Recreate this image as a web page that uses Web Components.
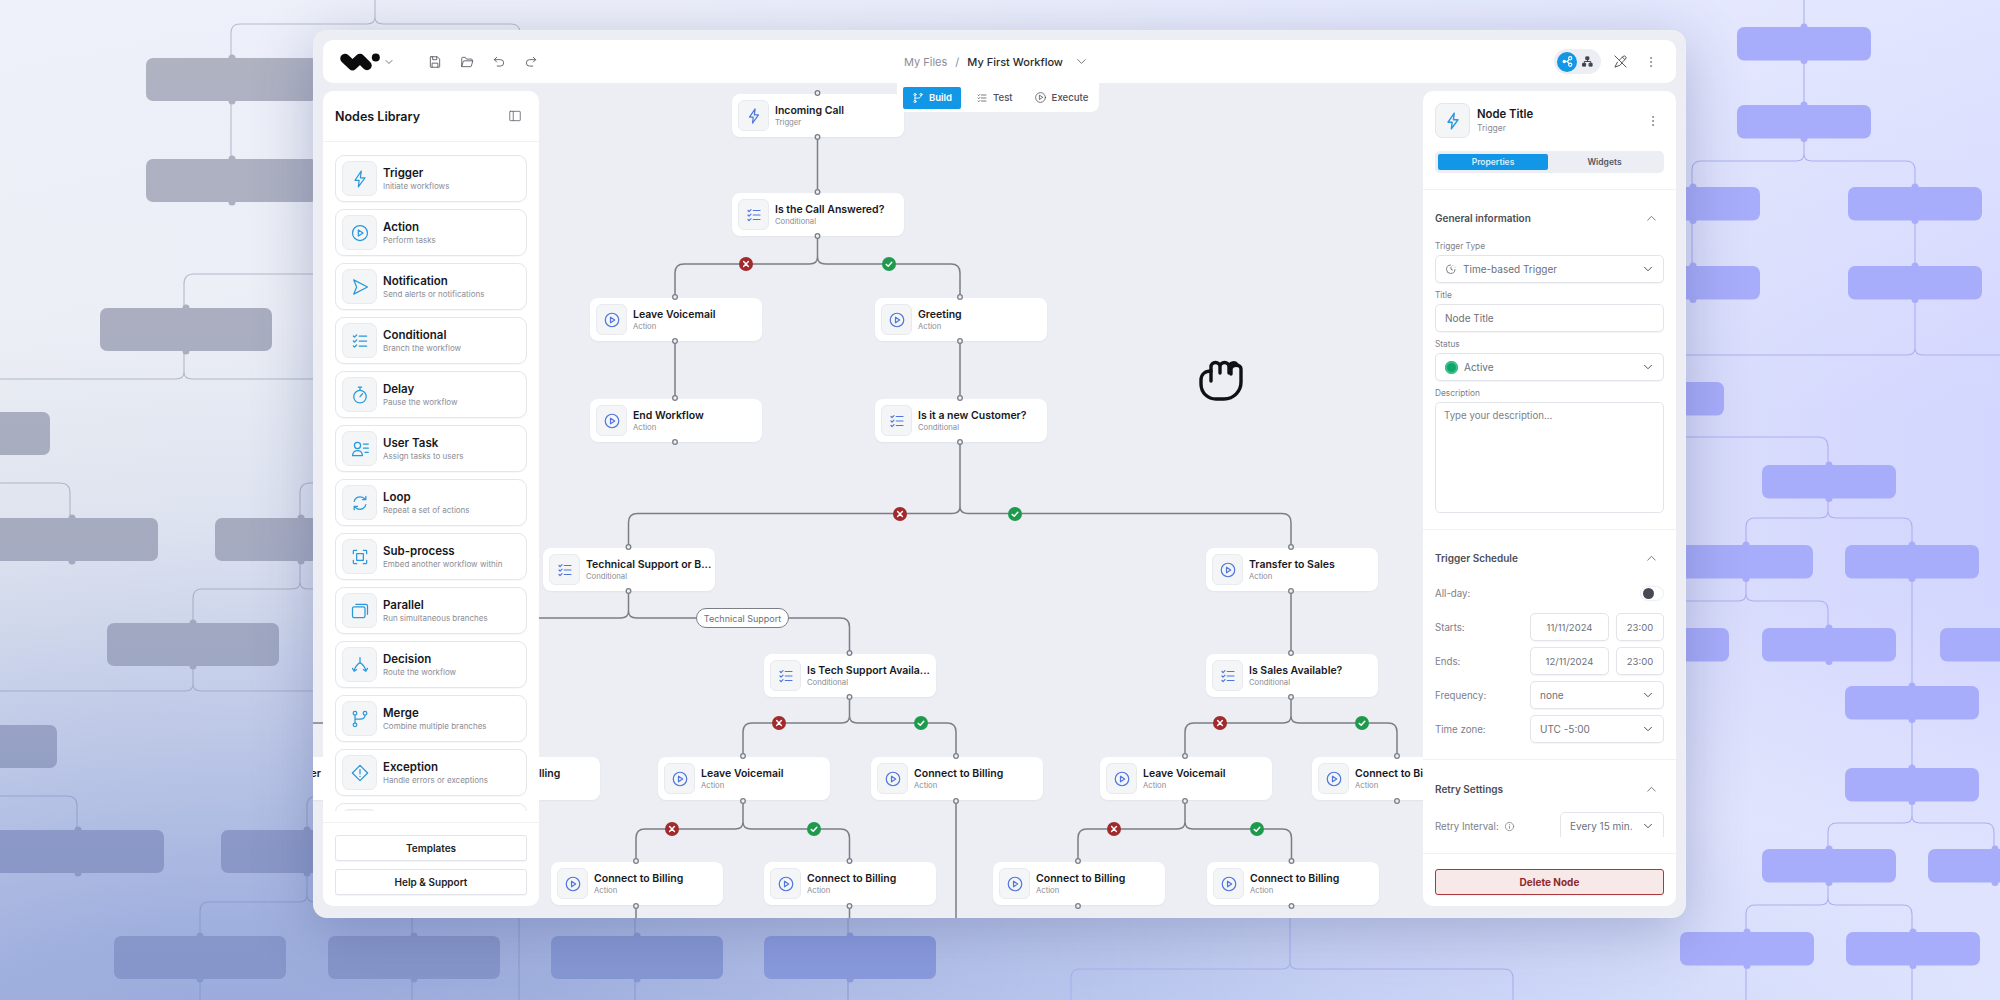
<!DOCTYPE html>
<html>
<head>
<meta charset="utf-8">
<title>Workflow builder</title>
<style>
  html, body { margin: 0; height: 100%; overflow: hidden; }
</style>
</head>
<body>
<wf-app></wf-app>
<script>
const ICONS = {
  bolt: '<path d="M13.5 2.5 6 13.5h5L10 21.5l8-11h-5.5l1-8z"/>',
  play: '<circle cx="12" cy="12" r="9"/><path d="M10 8.3v7.4l5.6-3.7z"/>',
  send: '<path d="M4.5 3.5 21 12 4.5 20.5 8 12 4.5 3.5z"/>',
  checks: '<path d="M11 6h9M11 12h9M11 18h9M4 6l1.4 1.4L8 4.8M4 12l1.4 1.4L8 10.8M4 18l1.4 1.4L8 16.8"/>',
  timer: '<circle cx="12" cy="14" r="7.5"/><path d="M10 2.5h4M12 14l3-3.5M12 2.5v4"/>',
  usertask: '<path d="M9 11.5a3.7 3.7 0 1 0 0-7.4 3.7 3.7 0 0 0 0 7.4zM3 20c.3-4 2.8-6 6-6s5.7 2 6 6zM16 6h6M16 11h6M18 16h4"/>',
  loop: '<path d="M5 10c1-3.5 4-5.5 7.2-5.5 2.6 0 4.7 1.2 6.3 3.2M19 4v4h-4M19 14c-1 3.5-4 5.5-7.2 5.5-2.6 0-4.7-1.2-6.3-3.2M5 20v-4h4"/>',
  subprocess: '<path d="M4 8V5a1 1 0 0 1 1-1h3M16 4h3a1 1 0 0 1 1 1v3M20 16v3a1 1 0 0 1-1 1h-3M8 20H5a1 1 0 0 1-1-1v-3"/><rect x="8" y="8" width="8" height="8"/>',
  parallel: '<rect x="3" y="7" width="15" height="13" rx="2"/><path d="M7 4h12a2 2 0 0 1 2 2v10"/>',
  decision: '<path d="M12 3v6M12 9c-3 2-6 5-7 10M12 9c3 2 6 5 7 10M3 16l2 3.5 3-2M21 16l-2 3.5-3-2"/>',
  merge: '<circle cx="6" cy="5" r="2.2"/><circle cx="18" cy="5" r="2.2"/><circle cx="6" cy="19" r="2.2"/><path d="M6 7.2v9.6M18 7.2c0 4-3 5-6 5H6"/>',
  exception: '<path d="M12 2.8 21.2 12 12 21.2 2.8 12zM12 8v5M12 16v.2"/>',
  clock: '<path d="M11 4a8.5 8.5 0 1 0 9 9M15.5 4.6l.1.1M19.4 8.4l.1.1M12 8v4.5l3 1.5"/>',
  save: '<path d="M5 3h11l4 4v13a1 1 0 0 1-1 1H5a1 1 0 0 1-1-1V4a1 1 0 0 1 1-1zM8 3v5h7V3M7 21v-7h10v7"/>',
  folder: '<path d="M3 19V5.5A1.5 1.5 0 0 1 4.5 4H9l2 3h8.5A1.5 1.5 0 0 1 21 8.5V10M3 19l2.8-8.2a1 1 0 0 1 1-.8H22l-2.7 9.2a1 1 0 0 1-1 .8H4a1 1 0 0 1-1-1z"/>',
  undo: '<path d="M8 4 4 8l4 4M4 8h10.5a5.5 5.5 0 0 1 0 11H9"/>',
  redo: '<path d="M16 4l4 4-4 4M20 8H9.5a5.5 5.5 0 0 0 0 11H15"/>',
  down: '<path d="M6 9l6 6 6-6"/>',
  up: '<path d="M5 15l7-7 7 7"/>',
  panel: '<rect x="3" y="4" width="18" height="16" rx="1"/><path d="M9 4v16"/>',
  penoff: '<path d="M7 13l-4 8 8-3 3.5-3.5M10 10l6-6a2 2 0 0 1 4 4l-6 6M15 5l4 4M3 3l18 18"/>',
  kebab: '<circle cx="12" cy="5" r="1" fill="currentColor"/><circle cx="12" cy="12" r="1" fill="currentColor"/><circle cx="12" cy="19" r="1" fill="currentColor"/>',
  graph: '<circle cx="17" cy="6" r="3"/><circle cx="17" cy="18" r="3"/><circle cx="6" cy="12" r="2.2" fill="currentColor"/><path d="M8 12h5M15 8.500l-4 3.500 4 3.500"/>',
  tree: '<rect x="9.500" y="3.500" width="5" height="5" fill="currentColor"/><rect x="3.500" y="15.500" width="5" height="5" fill="currentColor"/><rect x="15.500" y="15.500" width="5" height="5" fill="currentColor"/><path d="M12 8.500V12M6 15.500V12h12v3.500"/>',
  branch: '<circle cx="6" cy="5" r="2.2"/><circle cx="18" cy="5" r="2.2"/><circle cx="6" cy="19" r="2.2"/><path d="M6 7.200v9.600M18 7.200c0 4-3 5-6 5H6"/>',
  info: '<circle cx="12" cy="12" r="9"/><path d="M12 11v5.500M12 7.500v.2"/>',
};

class WfIcon extends HTMLElement {
  constructor() {
    super();
    this.attachShadow({ mode: "open" });
    const size = this.getAttribute("size") || 18;
    const sw = this.getAttribute("sw") || 1.6;
    this.shadowRoot.innerHTML = `
      <style>
        :host { display: inline-flex; width: ${size}px; height: ${size}px; flex: none; }
        svg { width: 100%; height: 100%; fill: none; stroke: currentColor; stroke-width: ${sw}; stroke-linecap: round; stroke-linejoin: round; }
      </style>
      <svg viewBox="0 0 24 24">${ICONS[this.getAttribute("name")] || ""}</svg>`;
  }
}

// rounded fork used by both the real canvas and the faded backdrop
function fork(cx, y0, yj, lx, rx, yl, yr) {
  let d = `M${cx} ${y0}V${yj - 7}`;
  if (lx !== null) {
    const r = 9;
    d += `M${cx} ${yj - 7}Q${cx} ${yj} ${cx - 8} ${yj}H${lx + (yl ? r : 0)}`;
    if (yl) d += `Q${lx} ${yj} ${lx} ${yj + r}V${yl}`;
  }
  if (rx !== null) {
    const r = 9;
    d += `M${cx} ${yj - 7}Q${cx} ${yj} ${cx + 8} ${yj}H${rx - (yr ? r : 0)}`;
    if (yr) d += `Q${rx} ${yj} ${rx} ${yj + r}V${yr}`;
  }
  return d;
}

class WfBackdrop extends HTMLElement {
  constructor() {
    super();
    this.attachShadow({ mode: "open" });
    const left = [
      [146, 58], [146, 159], [100, 308], [-122, 412], [-14, 518], [215, 518], [107, 623],
      [-115, 725], [-8, 830], [221, 830], [114, 936], [328, 936],
    ];
    const blue = [[551, 936, "#8698d3"], [764, 936, "#8a9bdd"]];
    const right = [
      [1737, 27], [1737, 105], [1626, 187], [1848, 187], [1626, 266], [1848, 266], [1590, 382],
      [1762, 465], [1679, 545], [1845, 545], [1595, 628], [1762, 628], [1940, 628],
      [1845, 686], [1845, 768], [1762, 849], [1928, 849], [1680, 932], [1846, 932],
    ];
    const rect = (b, w, h, fill) => {
      const cx = b[0] + w / 2;
      return `<g fill="${fill}"><rect x="${b[0]}" y="${b[1]}" width="${w}" height="${h}" rx="7"/>
        <circle cx="${cx}" cy="${b[1]}" r="3.500"/><circle cx="${cx}" cy="${b[1] + h}" r="3.500"/></g>`;
    };
    const leftLines = [
      fork(375, -10, 24, 231, 520, 58, 40),
      "M231 101V159",
      "M313 274H194Q184 274 184 284V308",
      fork(184, 350, 379, 0, 313),
      "M0 483H60Q70 483 70 493V518",
      "M313 483H310Q300 483 300 493V518",
      fork(300, 560, 589, 193, 313, 623),
      fork(193, 665, 691, 0, 313),
      "M0 796H67Q77 796 77 806V830",
      "M313 796H317Q307 796 307 806V830",
      fork(307, 873, 902, 200, 313, 936),
      "M412 917V936M635 917V936M848 917V936M519 917V1000",
      "M200 979V1000M412 979V1000M635 979V1000M848 979V1000",
    ];
    const rightLines = [
      "M1804 0V27M1804 62V105",
      fork(1804, 138, 161, 1692, 1915, 187, 187),
      "M1692 221V266M1915 221V266",
      fork(1915, 299, 355, 1686, 2000),
      "M1686 437H1818Q1828 437 1828 447V465",
      fork(1828, 498, 518, 1746, 1912, 545, 545),
      fork(1746, 579, 601, 1686, 1828, null, 628),
      "M1912 579V686M1912 719V768",
      fork(1912, 802, 823, 1828, 1994, 849, 849),
      fork(1828, 883, 905, 1746, 1912, 932, 932),
      "M1746 965V1000M1912 965V1000",
      fork(1290, 917, 969, 1071, 1513, 1000, 1000),
    ];
    this.shadowRoot.innerHTML = `
      <style>
        :host {
          display: block;
          position: absolute;
          inset: 0;
          background:
            radial-gradient(1500px 800px at 12% 112%, #93a5d9 0%, rgba(147,165,217,.85) 25%, rgba(147,165,217,.5) 50%, rgba(147,165,217,.15) 75%, rgba(147,165,217,0) 100%),
            radial-gradient(1000px 300px at 62% 108%, rgba(180,196,246,.75) 0%, rgba(180,196,246,0) 100%),
            linear-gradient(180deg, rgba(240,243,255,.5) 0%, rgba(240,243,255,0) 42%, rgba(240,243,255,0) 60%, rgba(240,243,255,.65) 100%),
            linear-gradient(90deg, #ebeef3 0%, #eaedf6 35%, #dde1fb 75%, #d3d6fe 100%);
        }
        svg { display: block; width: 2000px; height: 1000px; }
      </style>
      <svg viewBox="0 0 2000 1000">
        <defs>
          <linearGradient id="grey" gradientUnits="userSpaceOnUse" x1="0" y1="0" x2="0" y2="1000">
            <stop offset="0" stop-color="#b0b3c2"/>
            <stop offset=".5" stop-color="#a7acbf"/>
            <stop offset=".68" stop-color="#9ea6c3"/>
            <stop offset=".85" stop-color="#8a98c7"/>
            <stop offset="1" stop-color="#8596cb"/>
          </linearGradient>
        </defs>
        <path d="${leftLines.join("")}" fill="none" stroke="url(#grey)" stroke-width="1.100" opacity=".85"/>
        <path d="${rightLines.join("")}" fill="none" stroke="#abb0f2" stroke-width="1.100"/>
        ${left.map((b) => rect(b, 172, 43, "url(#grey)")).join("")}
        ${blue.map((b) => rect(b, 172, 43, b[2])).join("")}
        ${right.map((b) => rect(b, 134, 33.500, "#a8adfb")).join("")}
      </svg>`;
  }
}

class WfTopbar extends HTMLElement {
  constructor() {
    super();
    this.attachShadow({ mode: "open" });
    this.shadowRoot.innerHTML = `
      <style>
        :host {
          display: grid;
          grid-template-columns: 1fr auto 1fr;
          align-items: center;
          height: 43px;
          background: #fff;
          border-radius: 10px;
          padding: 0 18px 0 17px;
          color: #3e4049;
          position: relative;
          z-index: 3;
        }
        .left, .right { display: flex; align-items: center; }
        .right { justify-content: flex-end; }
        .logo { width: 40px; height: 18px; display: block; }
        .logo-chev { margin-left: 3px; color: #555; }
        .tools { display: flex; gap: 18px; margin-left: 33px; color: #555862; }
        .crumbs { display: flex; align-items: center; font-size: 11px; color: #8a8d96; margin-right: 5px; }
        .crumbs b { font-weight: 500; color: #2a2b31; margin-left: 8px; }
        .crumbs i { font-style: normal; margin-left: 8px; }
        .crumbs wf-icon { margin-left: 11px; color: #555862; }
        .toggle { display: flex; align-items: center; width: 47px; height: 25px; border-radius: 13px; background: #eceef3; padding-left: 3px; box-sizing: border-box; margin-right: 12px; }
        .toggle .on { width: 20px; height: 20px; border-radius: 50%; background: #1296e6; color: #fff; display: flex; align-items: center; justify-content: center; }
        .toggle .off { margin-left: 4px; color: #3e4049; display: flex; }
        .pen { margin-right: 16px; color: #3e4049; }
        .kebab { color: #8a8d96; }
      </style>
      <div class="left">
        <svg class="logo" viewBox="0 0 40 18">
          <path d="M5 5.500 12.500 12.500 20 5.500 27 12.500" fill="none" stroke="#0b0b0d" stroke-width="9.500" stroke-linecap="round" stroke-linejoin="round"/>
          <circle cx="35.800" cy="4.500" r="4" fill="#0b0b0d"/>
        </svg>
        <wf-icon class="logo-chev" name="down" size="12"></wf-icon>
        <div class="tools">
          <wf-icon name="save" size="14" sw="1.500"></wf-icon>
          <wf-icon name="folder" size="14" sw="1.500"></wf-icon>
          <wf-icon name="undo" size="14" sw="1.500"></wf-icon>
          <wf-icon name="redo" size="14" sw="1.500"></wf-icon>
        </div>
      </div>
      <div class="crumbs">
        <span>My Files</span><i>/</i><b>My First Workflow</b>
        <wf-icon name="down" size="15" sw="1.300"></wf-icon>
      </div>
      <div class="right">
        <div class="toggle">
          <span class="on"><wf-icon name="graph" size="13" sw="2"></wf-icon></span>
          <span class="off"><wf-icon name="tree" size="13" sw="1.800"></wf-icon></span>
        </div>
        <wf-icon class="pen" name="penoff" size="15" sw="1.400"></wf-icon>
        <wf-icon class="kebab" name="kebab" size="14"></wf-icon>
      </div>`;
  }
}

class LibItem extends HTMLElement {
  constructor() {
    super();
    this.attachShadow({ mode: "open" });
    this.shadowRoot.innerHTML = `
      <style>
        :host {
          display: flex;
          align-items: center;
          flex: none;
          box-sizing: border-box;
          height: 47px;
          padding: 0 6px;
          border: 1px solid #e4e6ea;
          border-radius: 9px;
          background: #fff;
          box-shadow: 0 1px 1px rgba(30,35,60,.03);
        }
        .tile { width: 35px; height: 35px; box-sizing: border-box; border-radius: 7px; background: #f4f5f7; border: 1px solid #e9eaee; display: flex; align-items: center; justify-content: center; color: #2a98da; margin-right: 6px; flex: none; }
        .t { font-size: 11.500px; font-weight: 600; color: #17181d; line-height: 15px; }
        .s { font-size: 8px; color: #8a8d96; line-height: 11px; }
      </style>
      <span class="tile"><wf-icon name="${this.getAttribute("icon")}" size="20" sw="1.500"></wf-icon></span>
      <div>
        <div class="t">${this.getAttribute("label")}</div>
        <div class="s">${this.getAttribute("hint")}</div>
      </div>`;
  }
}

class WfButton extends HTMLElement {
  constructor() {
    super();
    this.attachShadow({ mode: "open" });
    this.shadowRoot.innerHTML = `
      <style>
        :host {
          display: flex;
          align-items: center;
          justify-content: center;
          box-sizing: border-box;
          height: 26px;
          border: 1px solid #e2e4e9;
          border-radius: 3px;
          background: #fff;
          font-size: 10px;
          font-weight: 600;
          color: #1d1e24;
          box-shadow: 0 1px 1px rgba(30,35,60,.05);
        }
        :host([danger]) { background: #f8e9e9; border-color: #a8383c; color: #8f2a2e; font-weight: 700; }
      </style>
      <slot></slot>`;
  }
}

class WfLibrary extends HTMLElement {
  constructor() {
    super();
    this.attachShadow({ mode: "open" });
    const items = [
      ["bolt", "Trigger", "Initiate workflows"],
      ["play", "Action", "Perform tasks"],
      ["send", "Notification", "Send alerts or notifications"],
      ["checks", "Conditional", "Branch the workflow"],
      ["timer", "Delay", "Pause the workflow"],
      ["usertask", "User Task", "Assign tasks to users"],
      ["loop", "Loop", "Repeat a set of actions"],
      ["subprocess", "Sub-process", "Embed another workflow within"],
      ["parallel", "Parallel", "Run simultaneous branches"],
      ["decision", "Decision", "Route the workflow"],
      ["merge", "Merge", "Combine multiple branches"],
      ["exception", "Exception", "Handle errors or exceptions"],
      ["", "", ""],
    ];
    this.shadowRoot.innerHTML = `
      <style>
        :host {
          display: flex;
          flex-direction: column;
          width: 216px;
          background: #fff;
          border-radius: 10px;
          overflow: hidden;
          position: relative;
          z-index: 2;
        }
        .head { height: 50px; flex: none; display: flex; align-items: center; justify-content: space-between; padding: 0 17px 0 12px; border-bottom: 1px solid #f0f1f4; font-size: 12.500px; font-weight: 600; color: #17181d; }
        .head wf-icon { color: #555862; }
        .list { flex: 1; min-height: 0; display: flex; flex-direction: column; gap: 7px; padding: 13px 12px 0; overflow: hidden; margin-bottom: 11px; }
        .foot { flex: none; border-top: 1px solid #f0f1f4; padding: 12px 12px 11px; display: flex; flex-direction: column; gap: 8px; }
      </style>
      <div class="head"><span>Nodes Library</span><wf-icon name="panel" size="14" sw="1.300"></wf-icon></div>
      <div class="list">
        ${items.map((i) => `<lib-item icon="${i[0]}" label="${i[1]}" hint="${i[2]}"></lib-item>`).join("")}
      </div>
      <div class="foot">
        <wf-button>Templates</wf-button>
        <wf-button>Help &amp; Support</wf-button>
      </div>`;
  }
}

const KIND_ICON = { Trigger: "bolt", Action: "play", Conditional: "checks" };
const CANVAS_X = 313;
const CANVAS_Y = 30;

class FlowNode extends HTMLElement {
  constructor() {
    super();
    this.attachShadow({ mode: "open" });
    const kind = this.getAttribute("kind");
    this.shadowRoot.innerHTML = `
      <style>
        :host {
          position: absolute;
          left: ${this.getAttribute("x") - CANVAS_X}px;
          top: ${this.getAttribute("y") - CANVAS_Y}px;
          width: 172px;
          height: 43px;
          box-sizing: border-box;
          display: flex;
          align-items: center;
          padding-left: 6px;
          background: #fff;
          border-radius: 8px;
          box-shadow: 0 1px 2px rgba(30,35,60,.05);
        }
        .tile { width: 31px; height: 31px; box-sizing: border-box; border-radius: 6px; background: #f4f5f7; border: 1px solid #e9eaee; display: flex; align-items: center; justify-content: center; color: #4f76dc; margin-right: 6px; flex: none; }
        .t { font-size: 10.500px; font-weight: 600; color: #17181d; line-height: 13px; white-space: nowrap; }
        .s { font-size: 7.700px; color: #8a8d96; line-height: 11px; }
      </style>
      <span class="tile"><wf-icon name="${KIND_ICON[kind]}" size="18" sw="1.600"></wf-icon></span>
      <div>
        <div class="t"><slot></slot></div>
        <div class="s">${kind}</div>
      </div>`;
  }
}

class FlowBadge extends HTMLElement {
  constructor() {
    super();
    this.attachShadow({ mode: "open" });
    const ok = this.hasAttribute("ok");
    this.shadowRoot.innerHTML = `
      <style>
        :host {
          position: absolute;
          left: ${this.getAttribute("x") - CANVAS_X - 7}px;
          top: ${this.getAttribute("y") - CANVAS_Y - 7}px;
          width: 14px;
          height: 14px;
          border-radius: 50%;
          background: ${ok ? "#1f9a4d" : "#a12a2c"};
          display: flex;
          align-items: center;
          justify-content: center;
        }
        svg { width: 8px; height: 8px; fill: none; stroke: #fff; stroke-width: 1.800; stroke-linecap: round; stroke-linejoin: round; }
      </style>
      <svg viewBox="0 0 10 10"><path d="${ok ? "M1.500 5.500l2.500 2.300 4.500-5" : "M2 2l6 6M8 2l-6 6"}"/></svg>`;
  }
}

class FlowPill extends HTMLElement {
  constructor() {
    super();
    this.attachShadow({ mode: "open" });
    this.shadowRoot.innerHTML = `
      <style>
        :host {
          position: absolute;
          left: ${this.getAttribute("x") - CANVAS_X}px;
          top: ${this.getAttribute("y") - CANVAS_Y}px;
          width: 93px;
          height: 20px;
          box-sizing: border-box;
          border: 1.500px solid #7b7e87;
          border-radius: 10px;
          background: #fff;
          display: flex;
          align-items: center;
          justify-content: center;
          font-size: 9px;
          color: #6d7078;
        }
      </style>
      <slot></slot>`;
  }
}

class CanvasTabs extends HTMLElement {
  constructor() {
    super();
    this.attachShadow({ mode: "open" });
    this.shadowRoot.innerHTML = `
      <style>
        :host {
          position: absolute;
          left: ${897 - CANVAS_X}px;
          top: ${83 - CANVAS_Y}px;
          box-sizing: border-box;
          width: 202px;
          height: 29px;
          padding: 3px 6px;
          background: #fff;
          border-radius: 0 0 8px 8px;
          display: flex;
          align-items: center;
          font-size: 9.600px;
          font-weight: 500;
          color: #4b4e57;
        }
        span { display: flex; align-items: center; gap: 5px; height: 22px; }
        .on { width: 58px; box-sizing: border-box; justify-content: center; background: #1296e6; color: #fff; border-radius: 2px; font-weight: 600; margin-right: 15px; }
        .test { margin-right: 21px; }
      </style>
      <span class="on"><wf-icon name="branch" size="12" sw="1.800"></wf-icon>Build</span>
      <span class="test"><wf-icon name="checks" size="12" sw="1.500"></wf-icon>Test</span>
      <span><wf-icon name="play" size="13" sw="1.400"></wf-icon>Execute</span>`;
  }
}

class WfCanvas extends HTMLElement {
  constructor() {
    super();
    this.attachShadow({ mode: "open" });
    const edges = [
      "M817.500 137V192",
      fork(817.5, 236, 264, 675, 960, 297, 297),
      "M675 341V398M960 341V398",
      fork(960, 442, 513.5, 628.5, 1291, 547, 547),
      fork(628.5, 591, 618, 520, 849.5, null, 653),
      fork(849.5, 697, 723, 743, 956, 756, 756),
      fork(743, 801, 829, 636, 849.5, 861, 861),
      "M956 801V918M636 906V918M849.500 906V918",
      "M1291 591V653",
      fork(1291, 697, 723, 1185, 1397, 756, 756),
      fork(1185, 801, 829, 1078, 1291.5, 861, 861),
      "M313 723H325",
    ];
    const ports = [
      [817.5, 93], [817.5, 137], [817.5, 192], [817.5, 236],
      [675, 297], [675, 341], [675, 398], [675, 442],
      [960, 297], [960, 341], [960, 398], [960, 442],
      [628.5, 547], [628.5, 591], [1291, 547], [1291, 591],
      [849.5, 653], [849.5, 697], [1291, 653], [1291, 697],
      [743, 756], [743, 801], [956, 756], [956, 801],
      [1185, 756], [1185, 801], [1397, 756], [1397, 801],
      [636, 861], [636, 906], [849.5, 861], [849.5, 906],
      [1078, 861], [1078, 906], [1291.5, 861], [1291.5, 906],
    ];
    this.shadowRoot.innerHTML = `
      <style>
        :host {
          position: absolute;
          inset: 0;
          overflow: hidden;
          border-radius: inherit;
          z-index: 1;
        }
        svg { position: absolute; left: 0; top: 0; width: 1373px; height: 888px; }
        .over { z-index: 2; pointer-events: none; }
        .hand { left: ${1180 - CANVAS_X}px; top: ${340 - CANVAS_Y}px; width: 80px; height: 80px; }
      </style>
      <svg viewBox="${CANVAS_X} ${CANVAS_Y} 1373 888">
        <path d="${edges.join("")}" fill="none" stroke="#7b7e87" stroke-width="1.500"/>
      </svg>
      <slot></slot>
      <svg class="over" viewBox="${CANVAS_X} ${CANVAS_Y} 1373 888">
        ${ports.map((p) => `<circle cx="${p[0]}" cy="${p[1]}" r="2.300" fill="#eef0f4" stroke="#7b7e87" stroke-width="1.300"/>`).join("")}
      </svg>
      <svg class="over hand" viewBox="0 0 80 80" fill="none" stroke="#101114" stroke-width="3.400" stroke-linecap="round" stroke-linejoin="round">
        <path d="M31 41V27a4.500 4.500 0 0 1 9 0v6M40 27a4.500 4.500 0 0 1 9 0v6M49 27a4.500 4.500 0 0 1 8 -2.500"/>
        <path d="M31 31c-6 0-10 3.500-10 9v4c0 9 7 15 15 15h8c10 0 17-8 17-17V29c0-5-9-5-10 0v5"/>
      </svg>`;
  }
}

class InsSection extends HTMLElement {
  constructor() {
    super();
    this.attachShadow({ mode: "open" });
    this.shadowRoot.innerHTML = `
      <style>
        :host { display: block; padding: ${this.getAttribute("pad") || "20px 12px 16px"}; border-bottom: 1px solid #f0f1f4; }
        :host([last]) { border-bottom: 0; }
        .h { display: flex; align-items: center; justify-content: space-between; height: 16px; font-size: 10px; font-weight: 600; color: #4b4e57; padding-right: 6px; }
        .h wf-icon { color: #5b5e67; }
        .b { display: flex; flex-direction: column; margin-top: ${this.getAttribute("gap") || 14}px; }
      </style>
      <div class="h"><span>${this.getAttribute("title")}</span><wf-icon name="up" size="13" sw="1.500"></wf-icon></div>
      <div class="b"><slot></slot></div>`;
  }
}

class InsBox extends HTMLElement {
  constructor() {
    super();
    this.attachShadow({ mode: "open" });
    const chev = this.hasAttribute("chevron") ? '<wf-icon name="down" size="14" sw="1.700"></wf-icon>' : "";
    this.shadowRoot.innerHTML = `
      <style>
        :host {
          display: flex;
          align-items: center;
          box-sizing: border-box;
          flex: 1;
          min-width: 0;
          height: 28px;
          padding: 0 8px 0 9px;
          border: 1px solid #e2e4e9;
          border-radius: 5px;
          background: #fff;
          font-size: 10px;
          color: #6d7078;
          box-shadow: 0 1px 1px rgba(30,35,60,.04);
        }
        :host([center]) { justify-content: center; padding: 0; font-size: 9.500px; }
        .t { flex: 1; display: flex; align-items: center; gap: 6px; }
        :host([center]) .t { flex: none; }
        wf-icon { color: #4b4e57; }
      </style>
      <span class="t"><slot></slot></span>${chev}`;
  }
}

class InsField extends HTMLElement {
  constructor() {
    super();
    this.attachShadow({ mode: "open" });
    this.shadowRoot.innerHTML = `
      <style>
        :host { display: block; margin-bottom: 6px; }
        :host(:last-child) { margin-bottom: 0; }
        label { display: block; height: 12px; line-height: 12px; font-size: 8.300px; color: #7d8089; margin-bottom: 3px; }
        div { display: flex; }
      </style>
      <label>${this.getAttribute("label")}</label>
      <div><slot></slot></div>`;
  }
}

class InsRow extends HTMLElement {
  constructor() {
    super();
    this.attachShadow({ mode: "open" });
    this.shadowRoot.innerHTML = `
      <style>
        :host { display: grid; grid-template-columns: 95px 1fr; align-items: center; height: 28px; margin-bottom: 6px; font-size: 9.700px; color: #7d8089; }
        :host([compact]) { margin-bottom: 0; }
        div { display: flex; gap: 7px; }
      </style>
      <span><slot name="label"></slot></span>
      <div><slot></slot></div>`;
  }
}

class WfInspector extends HTMLElement {
  constructor() {
    super();
    this.attachShadow({ mode: "open" });
    this.shadowRoot.innerHTML = `
      <style>
        :host {
          display: flex;
          flex-direction: column;
          width: 253px;
          background: #fff;
          border-radius: 10px;
          overflow: hidden;
          position: relative;
          z-index: 2;
        }
        .scroll { flex: 1; min-height: 0; overflow: hidden; margin-bottom: 16px; }
        .top { padding: 12px 12px 16px; border-bottom: 1px solid #f0f1f4; }
        .who { display: flex; align-items: center; height: 35px; }
        .tile { width: 35px; height: 35px; box-sizing: border-box; border-radius: 7px; background: #f4f5f7; border: 1px solid #e4e6ea; display: flex; align-items: center; justify-content: center; color: #2a98da; margin-right: 7px; flex: none; }
        .name { flex: 1; padding-top: 1px; }
        .name b { display: block; font-size: 11.300px; font-weight: 600; color: #17181d; line-height: 15px; }
        .name span { font-size: 8.500px; color: #8a8d96; line-height: 13px; display: block; }
        .who > wf-icon { color: #8a8d96; margin-right: 4px; }
        .tabs { display: grid; grid-template-columns: 110px 1fr; height: 22px; margin-top: 13px; background: #eceef3; border-radius: 5px; padding: 3px; box-sizing: border-box; font-size: 8.500px; font-weight: 600; }
        .tabs span { display: flex; align-items: center; justify-content: center; color: #555862; }
        .tabs .on { background: #1296e6; color: #d9f0ff; border-radius: 2px; }
        .dot { width: 13px; height: 13px; border-radius: 50%; background: #0ea66b; box-shadow: inset 0 0 0 2px #3cc08e; flex: none; }
        .area { flex: 1; height: 111px; box-sizing: border-box; border: 1px solid #e2e4e9; border-radius: 5px; padding: 7px 8px; font-size: 9.700px; color: #7d8089; }
        .allday { display: flex; align-items: center; justify-content: space-between; height: 15px; margin-top: 20px; margin-bottom: 12px; font-size: 9.700px; color: #7d8089; }
        .switch { width: 24px; height: 15px; border-radius: 8px; background: #fff; border: 1px solid #eceef3; box-sizing: border-box; display: flex; align-items: center; padding-left: 2px; }
        .switch i { width: 11px; height: 11px; border-radius: 50%; background: #474a54; }
        .retry-label { display: flex; align-items: center; gap: 5px; }
        .retry-label wf-icon { color: #6d7078; }
        .foot { flex: none; border-top: 1px solid #f0f1f4; padding: 15px 12px 11px; }
      </style>
      <div class="scroll">
        <div class="top">
          <div class="who">
            <span class="tile"><wf-icon name="bolt" size="20" sw="1.700"></wf-icon></span>
            <div class="name"><b>Node Title</b><span>Trigger</span></div>
            <wf-icon name="kebab" size="14"></wf-icon>
          </div>
          <div class="tabs"><span class="on">Properties</span><span>Widgets</span></div>
        </div>
        <ins-section title="General information">
          <ins-field label="Trigger Type"><ins-box chevron><wf-icon name="clock" size="12" sw="1.800"></wf-icon>Time-based Trigger</ins-box></ins-field>
          <ins-field label="Title"><ins-box>Node Title</ins-box></ins-field>
          <ins-field label="Status"><ins-box chevron><span class="dot"></span>Active</ins-box></ins-field>
          <ins-field label="Description"><div class="area">Type your description...</div></ins-field>
        </ins-section>
        <ins-section title="Trigger Schedule" pad="20px 12px 16px" gap="0">
          <div class="allday"><span>All-day:</span><span class="switch"><i></i></span></div>
          <ins-row><span slot="label">Starts:</span><ins-box center style="flex:0 0 79px">11/11/2024</ins-box><ins-box center>23:00</ins-box></ins-row>
          <ins-row><span slot="label">Ends:</span><ins-box center style="flex:0 0 79px">12/11/2024</ins-box><ins-box center>23:00</ins-box></ins-row>
          <ins-row><span slot="label">Frequency:</span><ins-box chevron>none</ins-box></ins-row>
          <ins-row compact><span slot="label">Time zone:</span><ins-box chevron>UTC -5:00</ins-box></ins-row>
        </ins-section>
        <ins-section title="Retry Settings" pad="21px 12px 0" gap="15" last>
          <ins-row compact style="grid-template-columns:125px 1fr"><span slot="label" class="retry-label">Retry Interval: <wf-icon name="info" size="11" sw="1.500"></wf-icon></span><ins-box chevron>Every 15 min.</ins-box></ins-row>
        </ins-section>
      </div>
      <div class="foot"><wf-button danger>Delete Node</wf-button></div>`;
  }
}

class WfWindow extends HTMLElement {
  constructor() {
    super();
    this.attachShadow({ mode: "open" });
    this.shadowRoot.innerHTML = `
      <style>
        :host {
          display: flex;
          flex-direction: column;
          gap: 8px;
          position: relative;
          box-sizing: border-box;
          width: 1373px;
          height: 888px;
          padding: 10px 10px 12px;
          background: #eceef3;
          border-radius: 14px;
          box-shadow: 0 14px 60px rgba(60,70,130,.32), inset 0 0 0 1px rgba(255,255,255,.15);
        }
        .main { flex: 1; min-height: 0; display: flex; justify-content: space-between; }
      </style>
      <wf-canvas>
        <flow-node x="732" y="94" kind="Trigger">Incoming Call</flow-node>
        <flow-node x="732" y="193" kind="Conditional">Is the Call Answered?</flow-node>
        <flow-node x="590" y="298" kind="Action">Leave Voicemail</flow-node>
        <flow-node x="875" y="298" kind="Action">Greeting</flow-node>
        <flow-node x="590" y="399" kind="Action">End Workflow</flow-node>
        <flow-node x="875" y="399" kind="Conditional">Is it a new Customer?</flow-node>
        <flow-node x="543" y="548" kind="Conditional">Technical Support or B...</flow-node>
        <flow-node x="1206" y="548" kind="Action">Transfer to Sales</flow-node>
        <flow-node x="764" y="654" kind="Conditional">Is Tech Support Availa...</flow-node>
        <flow-node x="1206" y="654" kind="Conditional">Is Sales Available?</flow-node>
        <flow-node x="235" y="757" kind="Action">Transfer</flow-node>
        <flow-node x="428" y="757" kind="Action">Connect to Billing</flow-node>
        <flow-node x="658" y="757" kind="Action">Leave Voicemail</flow-node>
        <flow-node x="871" y="757" kind="Action">Connect to Billing</flow-node>
        <flow-node x="1100" y="757" kind="Action">Leave Voicemail</flow-node>
        <flow-node x="1312" y="757" kind="Action">Connect to Billing</flow-node>
        <flow-node x="551" y="862" kind="Action">Connect to Billing</flow-node>
        <flow-node x="764" y="862" kind="Action">Connect to Billing</flow-node>
        <flow-node x="993" y="862" kind="Action">Connect to Billing</flow-node>
        <flow-node x="1207" y="862" kind="Action">Connect to Billing</flow-node>
        <flow-badge x="746" y="264"></flow-badge>
        <flow-badge x="889" y="264" ok></flow-badge>
        <flow-badge x="900" y="513.500"></flow-badge>
        <flow-badge x="1015" y="513.500" ok></flow-badge>
        <flow-badge x="778.500" y="723"></flow-badge>
        <flow-badge x="921" y="723" ok></flow-badge>
        <flow-badge x="1220" y="723"></flow-badge>
        <flow-badge x="1362" y="723" ok></flow-badge>
        <flow-badge x="672" y="829"></flow-badge>
        <flow-badge x="814" y="829" ok></flow-badge>
        <flow-badge x="1113.500" y="829"></flow-badge>
        <flow-badge x="1256.500" y="829" ok></flow-badge>
        <flow-pill x="696" y="608">Technical Support</flow-pill>
        <canvas-tabs></canvas-tabs>
      </wf-canvas>
      <wf-topbar></wf-topbar>
      <div class="main">
        <wf-library></wf-library>
        <wf-inspector></wf-inspector>
      </div>`;
  }
}

class WfApp extends HTMLElement {
  constructor() {
    super();
    this.attachShadow({ mode: "open" });
    this.shadowRoot.innerHTML = `
      <style>
        :host {
          display: block;
          position: relative;
          width: 2000px;
          height: 1000px;
          box-sizing: border-box;
          padding: 30px 314px 82px 313px;
          overflow: hidden;
          font-family: Inter, "Open Sans", sans-serif;
          letter-spacing: 0;
        }
      </style>
      <wf-backdrop></wf-backdrop>
      <wf-window></wf-window>`;
  }
}

customElements.define("wf-icon", WfIcon);
customElements.define("wf-backdrop", WfBackdrop);
customElements.define("wf-topbar", WfTopbar);
customElements.define("lib-item", LibItem);
customElements.define("wf-button", WfButton);
customElements.define("wf-library", WfLibrary);
customElements.define("flow-node", FlowNode);
customElements.define("flow-badge", FlowBadge);
customElements.define("flow-pill", FlowPill);
customElements.define("canvas-tabs", CanvasTabs);
customElements.define("wf-canvas", WfCanvas);
customElements.define("ins-section", InsSection);
customElements.define("ins-box", InsBox);
customElements.define("ins-field", InsField);
customElements.define("ins-row", InsRow);
customElements.define("wf-inspector", WfInspector);
customElements.define("wf-window", WfWindow);
customElements.define("wf-app", WfApp);
</script>
</body>
</html>
